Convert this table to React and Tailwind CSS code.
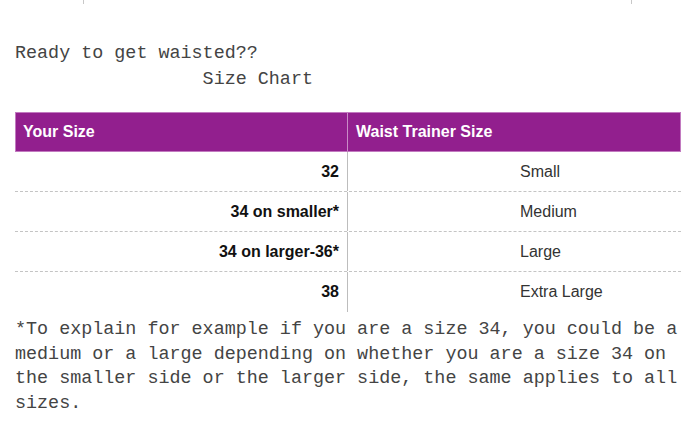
import React from 'react';

const rows = [
    { size: '32', trainer: 'Small' },
    { size: '34 on smaller*', trainer: 'Medium' },
    { size: '34 on larger-36*', trainer: 'Large' },
    { size: '38', trainer: 'Extra Large' },
];

const mono = { fontFamily: '"Liberation Mono", "Courier New", monospace' };
const sans = { fontFamily: '"Liberation Sans", Arial, sans-serif' };

export default function App() {
    return (
        <div className="w-[690px] h-[422px] bg-white overflow-hidden px-[15px] pr-[9px]">
            {/* leftover frame from the block above */}
            <div className="ml-[68px] mr-[49px] h-[4px] border-x border-[#c8c8c8]"></div>

            <div className="mt-[37px] text-[18.4px] leading-[25.5px] text-[#444] whitespace-pre" style={mono}>
                <div>Ready to get waisted??</div>
                <div>{'                 Size Chart'}</div>
            </div>

            {/* Size table */}
            <div className="mt-[20px] w-[666px]" style={sans}>
                <div className="flex h-[40px] bg-[#921f8e] border border-[#c27ac0] text-white font-bold text-[16px]">
                    <div className="w-[332px] flex items-center pl-[7px] border-r border-[#c98bc7]">Your Size</div>
                    <div className="flex-1 flex items-center pl-[8px]">Waist Trainer Size</div>
                </div>
                {rows.map((row, i) => (
                    <div
                        key={row.size}
                        className={`flex h-[40px] text-[16px] ${i < rows.length - 1 ? 'border-b border-dashed border-[#c4c4c4]' : ''}`}
                    >
                        <div className="w-[333px] flex items-center justify-end pr-[8px] font-bold text-[#111] border-r border-[#bdbdbd]">
                            {row.size}
                        </div>
                        <div className="flex-1 flex items-center pl-[172px] text-[#333]">{row.trainer}</div>
                    </div>
                ))}
            </div>

            <p className="mt-[6px] text-[18.4px] leading-[24.7px] text-[#444]" style={mono}>
                *To explain for example if you are a size 34, you could be a medium or a large depending on whether you are a size 34 on the smaller side or the larger side, the same applies to all sizes.
            </p>
        </div>
    );
}
